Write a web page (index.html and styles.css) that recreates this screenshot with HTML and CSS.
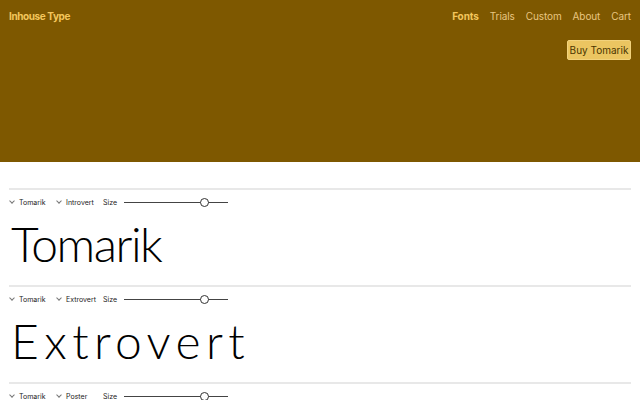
FILE: index.html
```html
<!DOCTYPE html>
<html>
<head>
<meta charset="utf-8">
<link rel="stylesheet" href="styles.css">
</head>
<body>
<header class="hero">
  <div class="topbar">
    <div class="brand">Inhouse Type</div>
    <nav class="nav">
      <a class="nav-link active">Fonts</a>
      <a class="nav-link">Trials</a>
      <a class="nav-link">Custom</a>
      <a class="nav-link">About</a>
      <a class="nav-link">Cart</a>
    </nav>
  </div>
  <div class="buy-row"><button class="buy">Buy Tomarik</button></div>
</header>
<main class="tester">
  <section class="specimen">
    <div class="controls">
      <span class="select"><span class="chev"></span>Tomarik</span>
      <span class="select"><span class="chev"></span>Introvert</span>
      <span class="size-label">Size</span>
      <span class="slider"><span class="thumb"></span></span>
    </div>
    <div class="sample introvert">Tomarik</div>
  </section>
  <section class="specimen">
    <div class="controls">
      <span class="select"><span class="chev"></span>Tomarik</span>
      <span class="select"><span class="chev"></span>Extrovert</span>
      <span class="size-label">Size</span>
      <span class="slider"><span class="thumb"></span></span>
    </div>
    <div class="sample extrovert">Extrovert</div>
  </section>
  <section class="specimen">
    <div class="controls">
      <span class="select"><span class="chev"></span>Tomarik</span>
      <span class="select"><span class="chev"></span>Poster</span>
      <span class="size-label">Size</span>
      <span class="slider"><span class="thumb"></span></span>
    </div>
    <div class="sample poster">Poster</div>
  </section>
</main>
</body>
</html>
```
FILE: styles.css
```css
* { box-sizing: border-box; }
html, body { margin: 0; padding: 0; }
body {
  font-family: Inter, "Liberation Sans", sans-serif;
  background: #fff;
  color: #111;
  overflow: hidden;
  height: 400px;
}
.hero {
  background: #7e5800;
  height: 162px;
  padding: 9px 9px 0 9px;
  color: #f3c65c;
}
.topbar {
  display: flex;
  justify-content: space-between;
  align-items: center;
  height: 14px;
}
.brand {
  font-weight: 700;
  font-size: 10px;
  letter-spacing: -0.4px;
}
.nav { display: flex; gap: 11px; }
.nav-link {
  font-size: 10px;
  color: #e9c680;
  letter-spacing: -0.1px;
}
.nav-link.active { font-weight: 700; color: #f3c65c; }
.buy-row {
  display: flex;
  justify-content: flex-end;
  margin-top: 17px;
}
.buy {
  font-family: inherit;
  font-size: 10px;
  background: #ebc561;
  color: #4a3500;
  border: 1px solid #f2d27c;
  border-radius: 2px;
  height: 20px;
  width: 64px;
  padding: 0;
}
.tester { padding: 26px 9px 0 9px; }
.specimen {
  border-top: 2px solid #e8e8e8;
  height: 97px;
}
.controls {
  display: flex;
  align-items: center;
  height: 24px;
  font-size: 7px;
  color: #222;
}
.select {
  display: flex;
  align-items: center;
  width: 47px;
  flex: none;
}
.chev {
  width: 4px;
  height: 4px;
  border-right: 1px solid #777;
  border-bottom: 1px solid #777;
  transform: rotate(45deg);
  margin: -3px 5px 0 1px;
}
.size-label { width: 21px; flex: none; }
.slider {
  position: relative;
  width: 104px;
  height: 1px;
  background: #444;
}
.thumb {
  position: absolute;
  left: 76px;
  top: -4px;
  width: 9px;
  height: 9px;
  border-radius: 50%;
  border: 1px solid #333;
  background: #fff;
}
.sample {
  font-family: Lato, "DejaVu Sans", sans-serif;
  font-weight: 300;
  font-size: 48px;
  line-height: 60px;
  color: #000;
  padding-left: 2px;
  letter-spacing: -1.5px;
}
.extrovert { letter-spacing: 5.4px; }
```
